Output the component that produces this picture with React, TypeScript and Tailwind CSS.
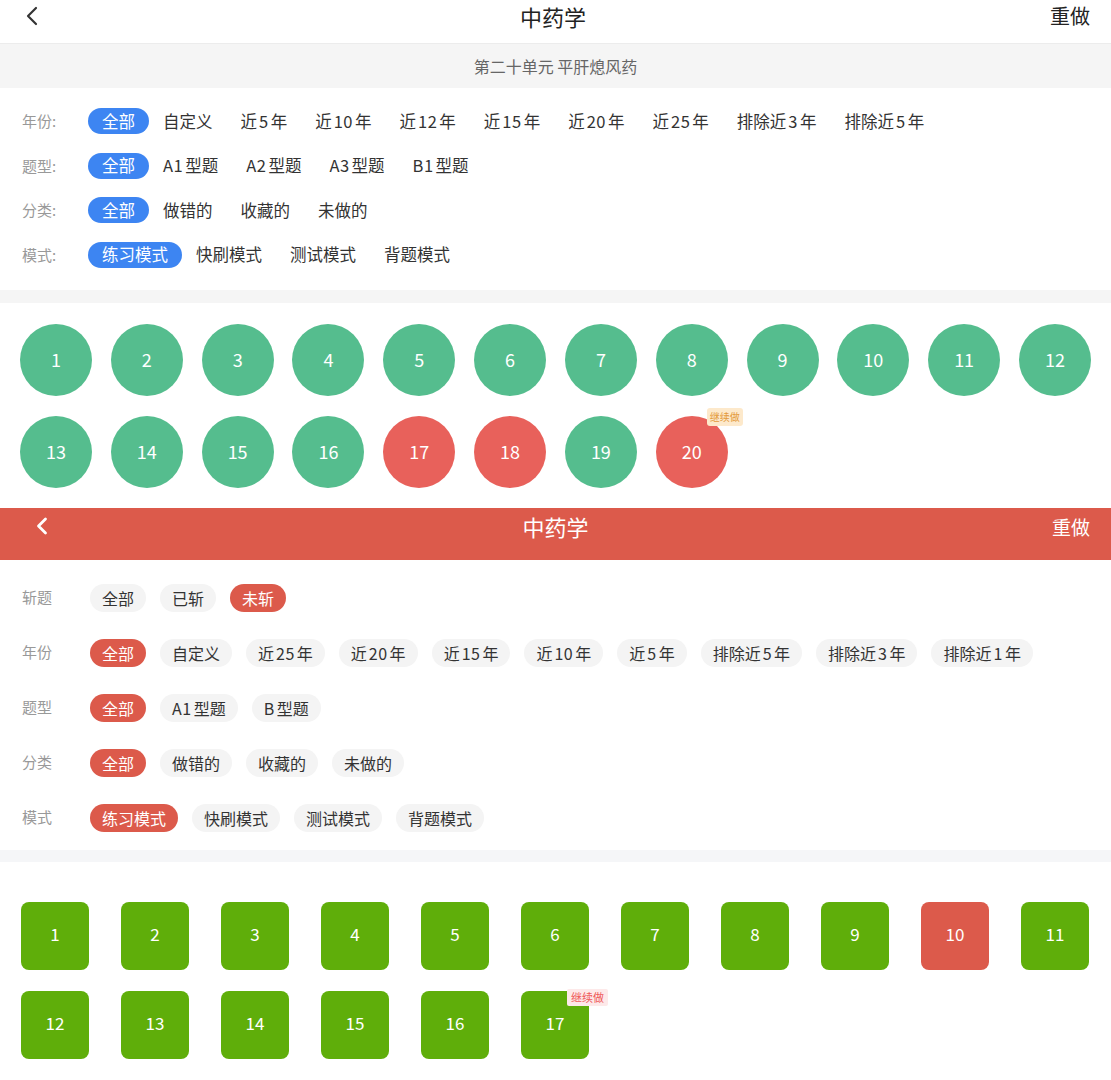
import React from 'react';
import { ChevronLeft } from 'lucide-react';

const FONT = { fontFamily: '"Noto Sans CJK SC", "Noto Sans", sans-serif' };

const topFilters = [
  { label: '年份:', items: ['全部', '自定义', '近5年', '近10年', '近12年', '近15年', '近20年', '近25年', '排除近3年', '排除近5年'], active: 0 },
  { label: '题型:', items: ['全部', 'A1型题', 'A2型题', 'A3型题', 'B1型题'], active: 0 },
  { label: '分类:', items: ['全部', '做错的', '收藏的', '未做的'], active: 0 },
  { label: '模式:', items: ['练习模式', '快刷模式', '测试模式', '背题模式'], active: 0 },
];

const bottomFilters = [
  { label: '斩题', items: ['全部', '已斩', '未斩'], active: 2 },
  { label: '年份', items: ['全部', '自定义', '近25年', '近20年', '近15年', '近10年', '近5年', '排除近5年', '排除近3年', '排除近1年'], active: 0 },
  { label: '题型', items: ['全部', 'A1型题', 'B型题'], active: 0 },
  { label: '分类', items: ['全部', '做错的', '收藏的', '未做的'], active: 0 },
  { label: '模式', items: ['练习模式', '快刷模式', '测试模式', '背题模式'], active: 0 },
];

const redCircles = [17, 18, 20];
const redSquares = [10];

// 字母数字与汉字之间留一点空隙，接近原图字体的间距
function ChipText({ text }: { text: string }) {
  const parts = text.split(/([A-Za-z0-9]+)/).filter(Boolean);
  return (
    <>
      {parts.map((p, i) => {
        if (!/^[A-Za-z0-9]+$/.test(p)) return <span key={i}>{p}</span>;
        const before = i > 0;
        const after = i < parts.length - 1;
        return (
          <span
            key={i}
            className={
              before && after
                ? 'px-[2px] tracking-[0.5px]'
                : after
                ? 'pr-[2px] tracking-[0.5px]'
                : 'pl-[2px] tracking-[0.5px]'
            }
          >
            {p}
          </span>
        );
      })}
    </>
  );
}

export default function App() {
  return (
    <div className="w-[1111px] min-h-[1080px] bg-white text-[#333]" style={FONT}>
      {/* 蓝色版本 */}
      <div className="h-[44px] flex items-center px-[16px] pb-[12px] border-b border-[#ececec]">
        <div className="flex-1 flex items-center">
          <ChevronLeft className="w-[32px] h-[32px] text-[#333]" strokeWidth={1.6} />
        </div>
        <div className="text-[22px] leading-none text-[#222]">中药学</div>
        <div className="flex-1 flex justify-end pr-[5px] text-[20px] leading-none text-[#222]">重做</div>
      </div>
      <div className="h-[44px] bg-[#f5f5f5] flex items-center justify-center text-[16px] text-[#666]">
        第二十单元 平肝熄风药
      </div>

      <div className="pt-[11px] pb-[13px]">
        {topFilters.map((row) => (
          <div key={row.label} className="h-[44.5px] flex items-center pl-[22px]">
            <div className="w-[66px] text-[15px] text-[#999]">{row.label}</div>
            <div className="flex items-center">
              {row.items.map((it, i) => (
                <span
                  key={it}
                  className={
                    i === row.active
                      ? 'h-[26px] px-[14px] flex items-center rounded-full bg-[#3d85f2] text-white text-[16.5px]'
                      : 'h-[26px] px-[14px] flex items-center text-[#333] text-[16.5px]'
                  }
                >
                  <ChipText text={it} />
                </span>
              ))}
            </div>
          </div>
        ))}
      </div>
      <div className="h-[13px] bg-[#f5f5f5]" />

      <div className="px-[20px] pt-[21px] pb-[20px]">
        <div className="grid grid-cols-[repeat(12,72px)] justify-between gap-y-[20px]">
          {Array.from({ length: 20 }, (_, i) => i + 1).map((n) => (
            <div
              key={n}
              className={
                redCircles.includes(n)
                  ? 'relative w-[72px] h-[72px] rounded-full bg-[#e8615b] flex items-center justify-center pb-[2px] text-white text-[18px]'
                  : 'relative w-[72px] h-[72px] rounded-full bg-[#55bd8e] flex items-center justify-center pb-[2px] text-white text-[18px]'
              }
            >
              {n}
              {n === 20 && (
                <span className="absolute left-[51px] top-[-8px] h-[18px] px-[3px] rounded-[3px] bg-[#fde9cb] text-[#e39a3c] text-[10px] leading-[18px] whitespace-nowrap">
                  继续做
                </span>
              )}
            </div>
          ))}
        </div>
      </div>

      {/* 红色版本 */}
      <div className="h-[52px] bg-[#dc5a4b] flex items-center px-[28px] pb-[16px] text-white">
        <div className="flex-1 flex items-center">
          <ChevronLeft className="w-[28px] h-[28px] text-white" strokeWidth={2.4} />
        </div>
        <div className="text-[22px] leading-none">中药学</div>
        <div className="flex-1 flex justify-end text-[19px] leading-none">
          <span className="mr-[-7px]">重做</span>
        </div>
      </div>

      <div className="pt-[10px] pb-[5px]">
        {bottomFilters.map((row) => (
          <div key={row.label} className="h-[55px] flex items-center pl-[22px]">
            <div className="w-[68px] text-[15px] text-[#999]">{row.label}</div>
            <div className="flex items-center gap-[14px]">
              {row.items.map((it, i) => (
                <span
                  key={it}
                  className={
                    i === row.active
                      ? 'h-[28px] px-[12px] flex items-center rounded-full bg-[#dc5a4b] text-white text-[16px]'
                      : 'h-[28px] px-[12px] flex items-center rounded-full bg-[#f4f4f4] text-[#333] text-[16px]'
                  }
                >
                  <ChipText text={it} />
                </span>
              ))}
            </div>
          </div>
        ))}
      </div>
      <div className="h-[12px] bg-[#f5f6f8]" />

      <div className="pl-[21px] pt-[40px] pb-[20px]">
        <div className="grid grid-cols-[repeat(11,68px)] gap-x-[32px] gap-y-[21px]">
          {Array.from({ length: 17 }, (_, i) => i + 1).map((n) => (
            <div
              key={n}
              className={
                redSquares.includes(n)
                  ? 'relative w-[68px] h-[68px] rounded-[8px] bg-[#dc5a4b] flex items-center justify-center pb-[4px] text-white text-[17px]'
                  : 'relative w-[68px] h-[68px] rounded-[8px] bg-[#5fae0a] flex items-center justify-center pb-[4px] text-white text-[17px]'
              }
            >
              {n}
              {n === 17 && (
                <span className="absolute left-[46px] top-[-2px] h-[17px] px-[4px] rounded-[2px] bg-[#fde9e9] text-[#ef5a5a] text-[11px] leading-[17px] whitespace-nowrap">
                  继续做
                </span>
              )}
            </div>
          ))}
        </div>
      </div>
    </div>
  );
}
